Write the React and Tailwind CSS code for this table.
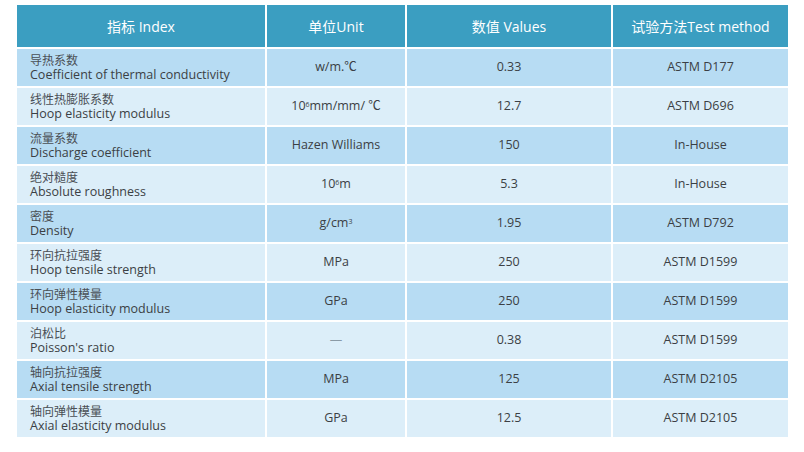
import React from "react";

const sup = "text-[7px] relative -top-[2px]";

const rows = [
  ["导热系数", "Coefficient of thermal conductivity", <>w/m.℃</>, "0.33", "ASTM D177"],
  ["线性热膨胀系数", "Hoop elasticity modulus", <>10<sup className={sup}>6</sup>mm/mm/ ℃</>, "12.7", "ASTM D696"],
  ["流量系数", "Discharge coefficient", <>Hazen Williams</>, "150", "In-House"],
  ["绝对糙度", "Absolute roughness", <>10<sup className={sup}>6</sup>m</>, "5.3", "In-House"],
  ["密度", "Density", <>g/cm<sup className={sup}>3</sup></>, "1.95", "ASTM D792"],
  ["环向抗拉强度", "Hoop tensile strength", <>MPa</>, "250", "ASTM D1599"],
  ["环向弹性模量", "Hoop elasticity modulus", <>GPa</>, "250", "ASTM D1599"],
  ["泊松比", "Poisson's ratio", <span className="text-[#8a9aa6]">—</span>, "0.38", "ASTM D1599"],
  ["轴向抗拉强度", "Axial tensile strength", <>MPa</>, "125", "ASTM D2105"],
  ["轴向弹性模量", "Axial elasticity modulus", <>GPa</>, "12.5", "ASTM D2105"],
];

const App = () => {
  return (
    <div
      className="w-[804px] h-[452px] bg-white pt-[5px] pl-[17px] text-[#3b3f44]"
      style={{ fontFamily: '"Open Sans", "Noto Sans CJK SC", sans-serif' }}
    >
      <div className="grid grid-cols-[248px_138px_204px_175px] gap-[2px] w-[771px]">
        {/* header */}
        <div className="h-[42px] bg-[#3b9ec1] text-white text-[14px] flex items-center justify-center">指标 Index</div>
        <div className="h-[42px] bg-[#3b9ec1] text-white text-[14px] flex items-center justify-center">单位Unit</div>
        <div className="h-[42px] bg-[#3b9ec1] text-white text-[14px] flex items-center justify-center">数值 Values</div>
        <div className="h-[42px] bg-[#3b9ec1] text-white text-[14px] flex items-center justify-center">试验方法Test method</div>

        {rows.map((r, i) => {
          const bg = i % 2 === 0 ? "bg-[#b7dcf3]" : "bg-[#dceef9]";
          return (
            <React.Fragment key={i}>
              <div className={`h-[37px] ${bg} pl-[13px] flex flex-col justify-center`}>
                <div className="text-[12px] leading-[14px] text-[#4a4f55]">{r[0]}</div>
                <div className="text-[12.5px] leading-[14px]">{r[1]}</div>
              </div>
              <div className={`h-[37px] ${bg} flex items-center justify-center text-[12.5px]`}>{r[2]}</div>
              <div className={`h-[37px] ${bg} flex items-center justify-center text-[12.5px]`}>{r[3]}</div>
              <div className={`h-[37px] ${bg} flex items-center justify-center text-[12.5px]`}>{r[4]}</div>
            </React.Fragment>
          );
        })}
      </div>
    </div>
  );
};

export default App;
